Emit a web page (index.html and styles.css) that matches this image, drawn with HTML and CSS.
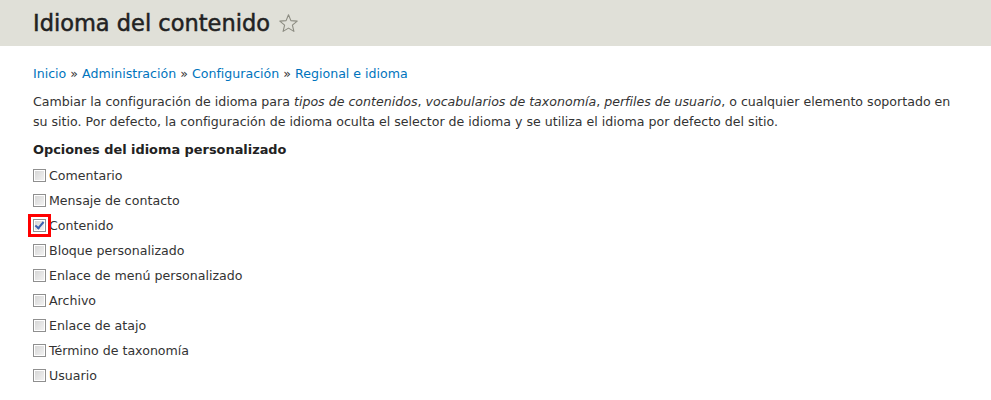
FILE: index.html
```html
<!DOCTYPE html>
<html lang="es">
<head>
<meta charset="utf-8">
<title>Idioma del contenido</title>
<link rel="stylesheet" href="styles.css">
</head>
<body>
<header class="branding">
  <h1 class="page-title">Idioma del contenido
    <svg class="star" width="21" height="21" viewBox="0 0 21 21" aria-hidden="true"><path d="M10.5 1.8 L12.9 7.6 L19.2 8.1 L14.4 12.2 L15.9 18.4 L10.5 15.1 L5.1 18.4 L6.6 12.2 L1.8 8.1 L8.1 7.6 Z" fill="none" stroke="#8c8c82" stroke-width="1.1" stroke-linejoin="round"/></svg>
  </h1>
</header>
<main class="page">
  <nav class="breadcrumb">
    <a href="#">Inicio</a> » <a href="#">Administración</a> » <a href="#">Configuración</a> » <a href="#">Regional e idioma</a>
  </nav>
  <p class="intro">Cambiar la configuración de idioma para <em>tipos de contenidos</em>, <em>vocabularios de taxonomía</em>, <em>perfiles de usuario</em>, o cualquier elemento soportado en su sitio. Por defecto, la configuración de idioma oculta el selector de idioma y se utiliza el idioma por defecto del sitio.</p>
  <h2 class="options-title">Opciones del idioma personalizado</h2>
  <ul class="options">
    <li><label><input type="checkbox" class="cb"> Comentario</label></li>
    <li><label><input type="checkbox" class="cb"> Mensaje de contacto</label></li>
    <li><label><input type="checkbox" class="cb cb-highlight" checked> Contenido</label></li>
    <li><label><input type="checkbox" class="cb"> Bloque personalizado</label></li>
    <li><label><input type="checkbox" class="cb"> Enlace de menú personalizado</label></li>
    <li><label><input type="checkbox" class="cb"> Archivo</label></li>
    <li><label><input type="checkbox" class="cb"> Enlace de atajo</label></li>
    <li><label><input type="checkbox" class="cb"> Término de taxonomía</label></li>
    <li><label><input type="checkbox" class="cb"> Usuario</label></li>
  </ul>
</main>
</body>
</html>
```
FILE: styles.css
```css
html, body {
  margin: 0;
  padding: 0;
  background: #fff;
}
body {
  font-family: "DejaVu Sans", "Lucida Grande", sans-serif;
  font-size: 12.6px;
  color: #333;
}
.branding {
  background: #e0e0d8;
  height: 46px;
  padding: 0 33px;
  display: flex;
  align-items: center;
}
.page-title {
  margin: 0;
  font-size: 22.5px;
  font-weight: normal;
  color: #222;
  -webkit-text-stroke: 0.5px #222;
  line-height: 1;
  display: flex;
  align-items: center;
  gap: 8px;
}
.star {
  display: block;
  margin-top: 1px;
}
.page {
  padding: 18px 33px 0;
}
.breadcrumb {
  line-height: 20px;
  margin: 0 0 8px;
}
.breadcrumb a {
  color: #0074bd;
  text-decoration: none;
}
.intro {
  margin: 0 0 8px;
  line-height: 20px;
}
.options-title {
  margin: 0 0 3px;
  font-size: 12.9px;
  font-weight: bold;
  line-height: 20px;
  color: #222;
}
.options {
  list-style: none;
  margin: 0;
  padding: 0;
}
.options li {
  height: 25px;
  display: flex;
  align-items: center;
}
.options label {
  display: flex;
  align-items: center;
  gap: 3px;
}
.cb {
  -webkit-appearance: none;
  appearance: none;
  margin: 0;
  width: 13px;
  height: 13px;
  border: 1px solid #8f8f8f;
  background: linear-gradient(135deg, #d4d4d4, #f4f4f4);
  box-shadow: inset 0 0 0 1px #fff;
  box-sizing: border-box;
  position: relative;
}
.cb:checked::after {
  content: "";
  position: absolute;
  left: 3px;
  top: 0px;
  width: 3px;
  height: 7px;
  border: solid #3a5fb0;
  border-width: 0 2px 2px 0;
  transform: rotate(40deg);
}
.cb-highlight {
  outline: 3px solid #ff0000;
  outline-offset: 2px;
}
```
